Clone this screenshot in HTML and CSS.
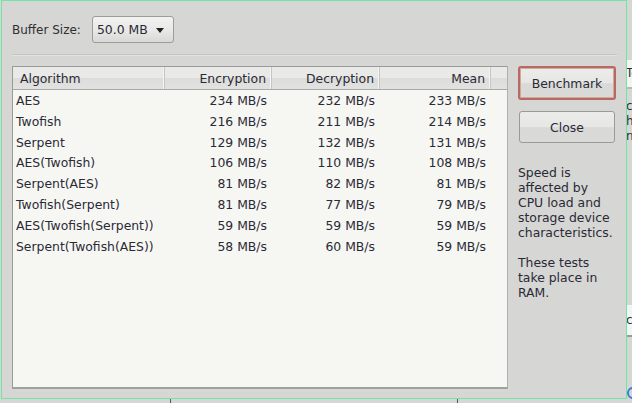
FILE: index.html
```html
<!DOCTYPE html>
<html>
<head>
<meta charset="utf-8">
<link rel="stylesheet" href="styles.css">
</head>
<body>
<div class="screen">
  <div class="dialog">
    <div class="toprow">
      <span class="label">Buffer Size:</span>
      <div class="combo"><span>50.0 MB</span><span class="arrow"></span></div>
    </div>
    <div class="sep"></div>
    <div class="main">
      <div class="list">
        <div class="head">
          <div class="hc left">Algorithm</div>
          <div class="hc">Encryption</div>
          <div class="hc">Decryption</div>
          <div class="hc">Mean</div>
          <div class="hc end"></div>
        </div>
        <div class="row"><span class="name">AES</span><span>234 MB/s</span><span>232 MB/s</span><span>233 MB/s</span></div>
        <div class="row"><span class="name">Twofish</span><span>216 MB/s</span><span>211 MB/s</span><span>214 MB/s</span></div>
        <div class="row"><span class="name">Serpent</span><span>129 MB/s</span><span>132 MB/s</span><span>131 MB/s</span></div>
        <div class="row"><span class="name">AES(Twofish)</span><span>106 MB/s</span><span>110 MB/s</span><span>108 MB/s</span></div>
        <div class="row"><span class="name">Serpent(AES)</span><span>81 MB/s</span><span>82 MB/s</span><span>81 MB/s</span></div>
        <div class="row"><span class="name">Twofish(Serpent)</span><span>81 MB/s</span><span>77 MB/s</span><span>79 MB/s</span></div>
        <div class="row"><span class="name">AES(Twofish(Serpent))</span><span>59 MB/s</span><span>59 MB/s</span><span>59 MB/s</span></div>
        <div class="row"><span class="name">Serpent(Twofish(AES))</span><span>58 MB/s</span><span>60 MB/s</span><span>59 MB/s</span></div>
      </div>
      <div class="side">
        <button class="btn default">Benchmark</button>
        <button class="btn close">Close</button>
        <p class="note">Speed is affected by CPU load and storage device characteristics.</p>
        <p class="note">These tests take place in RAM.</p>
      </div>
    </div>
  </div>
  <div class="behind">
    <div class="b-gap1"></div>
    <div class="b-field">Te</div>
    <div class="b-text">c<br>h<br>n</div>
    <div class="b-gap2"></div>
    <div class="b-field2">c</div>
    <div class="b-gap3"></div>
    <div class="b-ring"></div>
  </div>
</div>
<div class="bottom">
  <span class="tick t1"></span>
  <span class="tick t2"></span>
</div>
</body>
</html>
```

FILE: styles.css
```css
html, body {
  margin: 0;
  padding: 0;
}
body {
  width: 632px;
  height: 403px;
  overflow: hidden;
  background: #d6d6d4;
  font-family: "DejaVu Sans", sans-serif;
  font-size: 12.4px;
  color: #2e3032;
}
.screen {
  display: flex;
  height: 399px;
}
.dialog {
  box-sizing: border-box;
  margin-left: 1px;
  width: 626px;
  height: 399px;
  border: 1px solid #6fe6a2;
  background: #d6d6d4;
  padding: 15px 9px 0 10px;
  display: flex;
  flex-direction: column;
}
.toprow {
  display: flex;
  align-items: center;
  height: 27px;
}
.label {
  font-size: 12px;
  margin-right: 11px;
}
.combo {
  box-sizing: border-box;
  width: 82px;
  height: 27px;
  border: 1px solid #9c9c9a;
  border-radius: 3px;
  background: linear-gradient(#f2f2f0 0%, #e8e8e6 55%, #d8d8d6 100%);
  display: flex;
  align-items: center;
  justify-content: space-between;
  padding: 0 9px 0 4px;
  color: #2a2a36;
}
.arrow {
  width: 0;
  height: 0;
  border-left: 4px solid transparent;
  border-right: 4px solid transparent;
  border-top: 5px solid #222;
  margin-top: 1px;
}
.sep {
  margin-top: 11px;
  height: 1px;
  background: #c4c4c2;
  border-bottom: 1px solid #e2e2e0;
}
.main {
  margin-top: 10px;
  display: flex;
  gap: 10px;
}
.list {
  box-sizing: border-box;
  width: 496px;
  height: 323px;
  background: #f6f7f3;
  border: 1px solid #9a9a98;
  border-right-color: #b0b0ae;
  border-bottom: 2px solid #a0a09e;
}
.head {
  display: grid;
  grid-template-columns: 152px 107px 108px 111px 1fr;
  height: 22px;
  border-bottom: 1px solid #a8a8a6;
  background: linear-gradient(#e9e9e7 0%, #e9e9e7 50%, #dcdcda 52%, #e2e2e0 100%);
}
.hc {
  display: flex;
  align-items: center;
  justify-content: flex-end;
  padding: 1px 5px 0 7px;
  border-right: 1px solid #c6c6c4;
  box-shadow: inset -1px 0 0 #f4f4f2;
  color: #2a2a36;
}
.hc.left {
  justify-content: flex-start;
}
.hc.end {
  border-right: none;
  box-shadow: none;
}
.row {
  display: grid;
  grid-template-columns: 152px 107px 108px 111px;
  height: 20.85px;
  align-items: center;
  color: #2a2a36;
}
.row span {
  text-align: right;
  padding-right: 5px;
}
.row span.name {
  text-align: left;
  padding-left: 3px;
}
.side {
  display: flex;
  flex-direction: column;
  width: 98px;
}
.btn {
  font-family: "DejaVu Sans", sans-serif;
  font-size: 12.4px;
  color: #2a2a36;
  box-sizing: border-box;
  border-radius: 3px;
  background: linear-gradient(#ececea 0%, #e6e6e4 50%, #d9d9d7 52%, #dadad8 100%);
  padding: 0;
}
.btn.default {
  width: 98px;
  height: 34px;
  border: 2px solid #b86a62;
  box-shadow: inset 0 0 0 1px #d0a8a2;
}
.btn.close {
  margin-top: 11px;
  margin-left: 1px;
  width: 96px;
  height: 32px;
  border: 1px solid #9a9a98;
}
.note {
  margin: 22px 0 0 0;
  line-height: 15px;
  color: #2a2a36;
  padding-right: 2px;
}
.note + .note {
  margin-top: 15px;
}
.behind {
  flex: 1;
  display: flex;
  flex-direction: column;
  overflow: hidden;
  font-size: 12px;
}
.b-gap1 { height: 60px; }
.b-field {
  height: 27px;
  background: #f4f4f2;
  border-bottom: 2px solid #b8b8b6;
  line-height: 27px;
  margin-left: -1px;
}
.b-text {
  margin-top: 10px;
  line-height: 15px;
  margin-left: -1px;
}
.b-gap2 { height: 162px; }
.b-field2 {
  height: 30px;
  background: #f4f4f2;
  border-bottom: 2px solid #9a9a98;
  line-height: 30px;
  margin-left: -1px;
}
.b-gap3 { height: 50px; }
.b-ring {
  width: 8px;
  height: 8px;
  border: 2px solid #3a7bd5;
  border-radius: 50%;
}
.bottom {
  position: relative;
  height: 4px;
  background: #d6d6d4;
}
.tick {
  position: absolute;
  top: 0;
  width: 1px;
  height: 4px;
  background: #555;
}
.t1 { left: 170px; }
.t2 { left: 457px; }
```
